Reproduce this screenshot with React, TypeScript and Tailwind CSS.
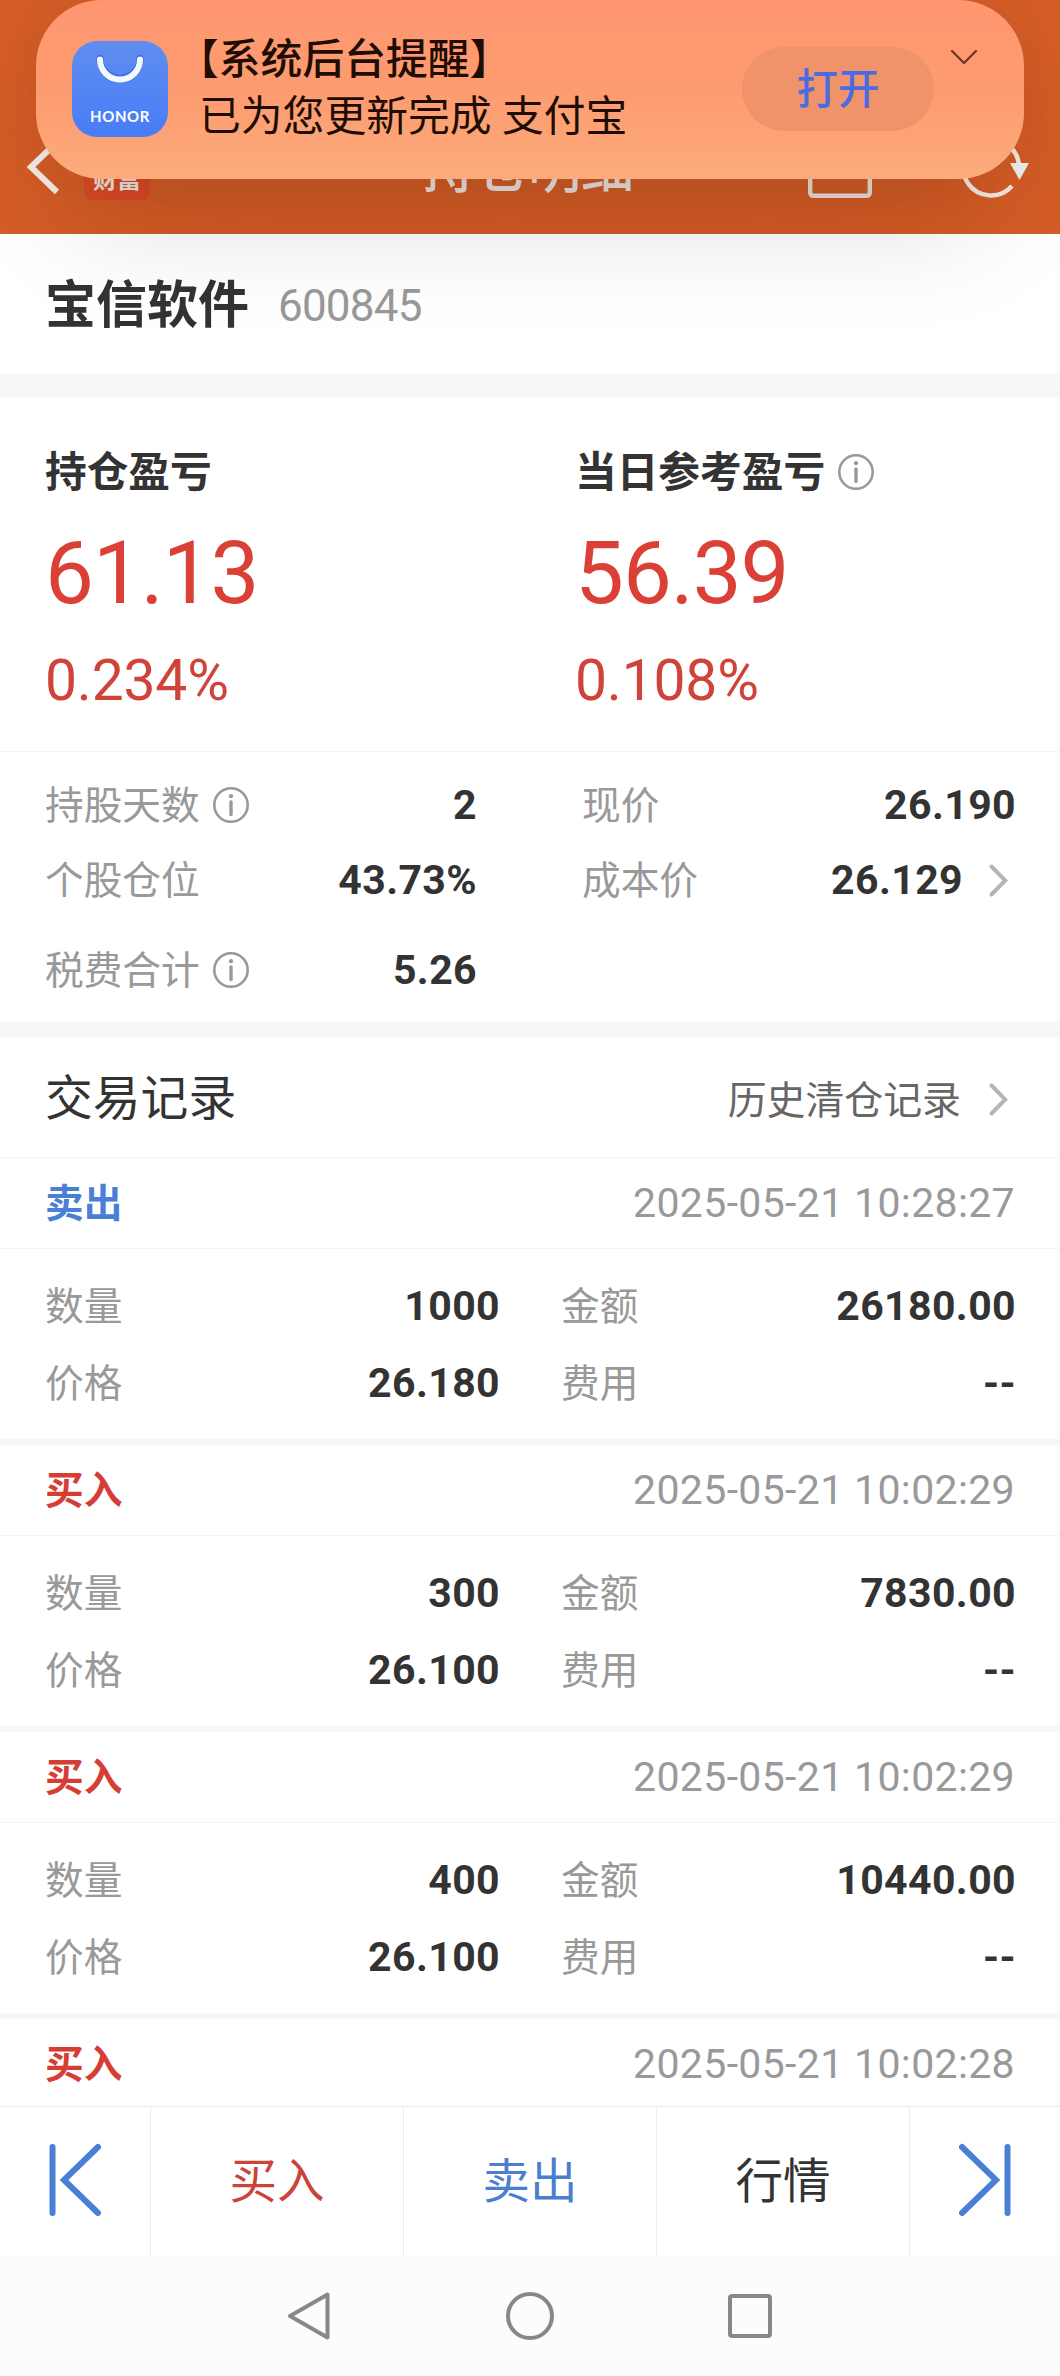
import clsx from 'clsx';

type Side = 'buy' | 'sell';

interface TradeRecord {
  side: Side;
  time: string;
  detail?: { quantity: string; price: string; amount: string; fee: string };
}

const records: TradeRecord[] = [
  {
    side: 'sell',
    time: '2025-05-21 10:28:27',
    detail: { quantity: '1000', price: '26.180', amount: '26180.00', fee: '--' },
  },
  {
    side: 'buy',
    time: '2025-05-21 10:02:29',
    detail: { quantity: '300', price: '26.100', amount: '7830.00', fee: '--' },
  },
  {
    side: 'buy',
    time: '2025-05-21 10:02:29',
    detail: { quantity: '400', price: '26.100', amount: '10440.00', fee: '--' },
  },
  { side: 'buy', time: '2025-05-21 10:02:28' },
];

function InfoIcon() {
  return (
    <svg width="36" height="36" viewBox="0 0 36 36" fill="none" className="shrink-0">
      <circle cx="18" cy="18" r="16.7" stroke="#999" strokeWidth="2.6" />
      <circle cx="18" cy="9.2" r="2.1" fill="#999" />
      <path d="M18 15v12.5" stroke="#999" strokeWidth="3.4" strokeLinecap="round" />
    </svg>
  );
}

function ArrowRight() {
  return (
    <svg width="19" height="33" viewBox="0 0 19 33" fill="none" className="shrink-0">
      <path d="M2.5 2.5l13.8 14-13.8 14" stroke="#b5b5b5" strokeWidth="4" strokeLinecap="round" />
    </svg>
  );
}

function Notification() {
  return (
    <div className="absolute left-9 top-0 z-10 flex h-[179px] w-[988px] rounded-[66px] bg-linear-to-b from-[#ff9670] via-[#fd9b70] via-50% to-[#fcab7c] shadow-[0_75px_120px_-40px_rgba(0,0,0,0.17),0_0_60px_rgba(0,0,0,0.06)]">
      <div className="mt-[41px] ml-9 flex h-24 w-24 shrink-0 flex-col items-center rounded-[25px] bg-linear-to-b from-[#608df0] to-[#467cf7]">
        <svg width="52" height="34" viewBox="0 0 52 34" fill="none" className="mt-[11px]">
          <path d="M6 6.4a20 20 0 0 0 40 0" stroke="#3a6be0" strokeWidth="7" strokeLinecap="round" />
          <path d="M6 7.4a20 20 0 0 0 40 0" stroke="#f5faff" strokeWidth="6" strokeLinecap="round" />
        </svg>
        <span className="mt-[23px] font-['Lato',sans-serif] text-[15px] leading-[15px] font-bold tracking-[0.6px] text-white">
          HONOR
        </span>
      </div>
      <div className="mt-[31px] ml-[31px] flex-1 text-[41.8px] whitespace-nowrap text-[#1f0d04]">
        <div className="-ml-[22px] leading-[57px] font-medium">【系统后台提醒】</div>
        <div className="leading-[57px]">已为您更新完成 支付宝</div>
      </div>
      <div className="mt-[47px] flex h-[84px] w-48 items-center justify-center rounded-full bg-[#f0936b] pt-[2px] text-[41.5px] leading-none font-medium text-[#4a6be2]">
        打开
      </div>
      <svg width="28" height="16" viewBox="0 0 28 16" fill="none" className="mt-[49px] mr-[46px] ml-4">
        <path d="M2 2l12 12L26 2" stroke="#6e3a24" strokeWidth="2.4" strokeLinecap="round" strokeLinejoin="round" />
      </svg>
    </div>
  );
}

function Header() {
  return (
    <header className="flex h-[234px] items-end bg-[#d45c26] text-[#eee2db]">
      <svg width="36" height="56" viewBox="0 0 36 56" fill="none" className="mb-[39px] ml-6 shrink-0">
        <path d="M33 3L7 28l26 25" stroke="#f4ebe6" strokeWidth="6" />
      </svg>
      <div className="mb-[34px] ml-6 flex h-9 w-[66px] items-center justify-center rounded-lg bg-[#da4a26] pb-[4px] text-[24px] leading-none font-bold">
        财富
      </div>
      <h1 className="mb-[34px] w-[760px] pl-[272px] text-[53px] leading-[60px] font-medium whitespace-nowrap">持仓明细</h1>
      <svg width="64" height="60" viewBox="0 0 64 60" fill="none" className="mb-9 -ml-[102px] shrink-0">
        <rect x="2.2" y="2.2" width="59.6" height="55.6" rx="3" stroke="#eee0d8" strokeWidth="4.4" />
      </svg>
      <svg width="72" height="64" viewBox="0 0 72 64" fill="none" className="mb-[35px] ml-[87px] shrink-0">
        <path d="M53 51A28 28 0 1 1 60 31" stroke="#f6e8e0" strokeWidth="4.4" />
        <path d="M51 28h19l-9.5 17z" fill="#f1efed" />
      </svg>
    </header>
  );
}

function ProfitCard({ title, value, percent, info }: { title: string; value: string; percent: string; info?: boolean }) {
  return (
    <div className="w-[530px] shrink-0 text-[#333]">
      <div className="flex h-[42px] items-center gap-[13px] text-[41.7px] leading-[46px] font-bold">
        <span className="pt-[2px]">{title}</span>
        {info && <InfoIcon />}
      </div>
      <div className="mt-[37px] text-[87px] leading-[87px] tracking-[-1px] text-[#da4035]">{value}</div>
      <div className="mt-[36px] text-[57px] leading-[56px] tracking-[-0.2px] text-[#d04338]">{percent}</div>
    </div>
  );
}

function Field({ label, value, info, arrow, className }: {
  label: string;
  value: string;
  info?: boolean;
  arrow?: boolean;
  className?: string;
}) {
  return (
    <div className={clsx('flex h-[42px] items-center leading-none', className)}>
      <span className="mr-[13px] pt-[2px] text-[38.7px] text-[#999]">{label}</span>
      {info && <InfoIcon />}
      <span className="-mr-[2px] ml-auto pt-px text-[41px] font-bold tracking-[0.4px] text-[#333]">{value}</span>
      {arrow && (
        <div className="mr-[6px] ml-[28px]">
          <ArrowRight />
        </div>
      )}
    </div>
  );
}

function Trade({ record }: { record: TradeRecord }) {
  const { side, time, detail } = record;
  return (
    <section className="h-[287px] shrink-0 border-b-[6px] border-[#f6f7f9]">
      <div className="flex h-[91px] items-center justify-between border-b border-[#f5f5f6] pr-[45px] pl-[45px] leading-none">
        <span className={clsx('pt-[2px] text-[38.7px] font-bold', side === 'buy' ? 'text-[#d63e35]' : 'text-[#4a7fd6]')}>
          {side === 'buy' ? '买入' : '卖出'}
        </span>
        <span className="pt-px text-[41px] tracking-[0.35px] text-[#999]">{time}</span>
      </div>
      {detail && (
        <div className="grid grid-cols-[453px_453px] gap-x-[63px] gap-y-[35px] pt-[36px] pl-[45px]">
          <Field label="数量" value={detail.quantity} />
          <Field label="金额" value={detail.amount} />
          <Field label="价格" value={detail.price} />
          <Field label="费用" value={detail.fee} />
        </div>
      )}
    </section>
  );
}

function BottomBar() {
  const cell = 'flex w-[253px] shrink-0 items-center justify-center border-l border-[#ebebeb] pt-[3px]';
  return (
    <div className="flex h-[150px] shrink-0 border-t border-[#ebebeb] bg-white text-[47.5px] leading-none">
      <div className="flex w-[150px] shrink-0 items-center justify-center pr-[2px] pb-[4px]">
        <svg width="54" height="74" viewBox="0 0 54 74" fill="none" stroke="#4a7fd6" strokeWidth="6" strokeLinecap="round">
          <path d="M5.5 4v66M51 4L17 37l34 33" />
        </svg>
      </div>
      <div className={clsx(cell, 'text-[#cc4339]')}>买入</div>
      <div className={clsx(cell, 'text-[#4a7fd0]')}>卖出</div>
      <div className={clsx(cell, 'text-[#333]')}>行情</div>
      <div className="flex flex-1 items-center justify-center border-l border-[#ebebeb] pb-[4px] pl-[2px]">
        <svg width="54" height="74" viewBox="0 0 54 74" fill="none" stroke="#4a7fd6" strokeWidth="6" strokeLinecap="round">
          <path d="M48.5 4v66M3 4l34 33L3 70" />
        </svg>
      </div>
    </div>
  );
}

function SystemNav() {
  return (
    <nav className="flex h-[120px] shrink-0 justify-center gap-[172px] bg-[#fcfcfc] pt-[35px]">
      <svg width="48" height="50" viewBox="0 0 48 50" fill="none" stroke="#888" strokeWidth="4" strokeLinejoin="round">
        <path d="M41.5 3.5v43L4 25z" />
      </svg>
      <svg width="48" height="50" viewBox="0 0 48 50" fill="none" stroke="#888" strokeWidth="4">
        <circle cx="24" cy="25" r="22" />
      </svg>
      <svg width="48" height="50" viewBox="0 0 48 50" fill="none" stroke="#888" strokeWidth="4">
        <rect x="4" y="5" width="40" height="40" rx="2" />
      </svg>
    </nav>
  );
}

export default function App() {
  return (
    <div className="relative flex h-[2376px] w-[1060px] flex-col overflow-hidden bg-white font-['Roboto','Noto_Sans_CJK_SC',sans-serif]">
      <Notification />
      <Header />

      <div className="flex h-[140px] items-center pt-[3px] pl-[45px] leading-none">
        <span className="text-[51px] font-bold text-[#333]">宝信软件</span>
        <span className="ml-[29px] text-[44px] tracking-[-0.8px] text-[#999]">600845</span>
      </div>
      <div className="h-6 bg-[#f6f7f9]" />

      <div className="flex h-[354px] border-b border-[#f5f5f6] pt-[53px] pl-[45px]">
        <ProfitCard title="持仓盈亏" value="61.13" percent="0.234%" />
        <ProfitCard title="当日参考盈亏" value="56.39" percent="0.108%" info />
      </div>

      <div className="flex h-[270px] justify-between pt-[32px] pr-[46px] pl-[45px]">
        <div className="w-[430px]">
          <Field label="持股天数" value="2" info />
          <Field label="个股仓位" value="43.73%" className="mt-[33px]" />
          <Field label="税费合计" value="5.26" info className="mt-[48px]" />
        </div>
        <div className="w-[432px]">
          <Field label="现价" value="26.190" />
          <Field label="成本价" value="26.129" arrow className="mt-[33px]" />
        </div>
      </div>
      <div className="h-[15px] bg-[#f6f7f9]" />

      <div className="flex h-[121px] items-center border-b border-[#f5f5f6] pt-[4px] pr-[46px] pl-[45px] leading-none">
        <h2 className="pt-px text-[47.8px] text-[#333]">交易记录</h2>
        <span className="mr-[28px] ml-auto pt-[5px] text-[38.9px] text-[#666]">历史清仓记录</span>
        <div className="mr-[6px]">
          <ArrowRight />
        </div>
      </div>

      <div className="flex h-[948px] flex-col overflow-hidden">
        {records.map((record, i) => (
          <Trade key={i} record={record} />
        ))}
      </div>

      <BottomBar />
      <SystemNav />
    </div>
  );
}
